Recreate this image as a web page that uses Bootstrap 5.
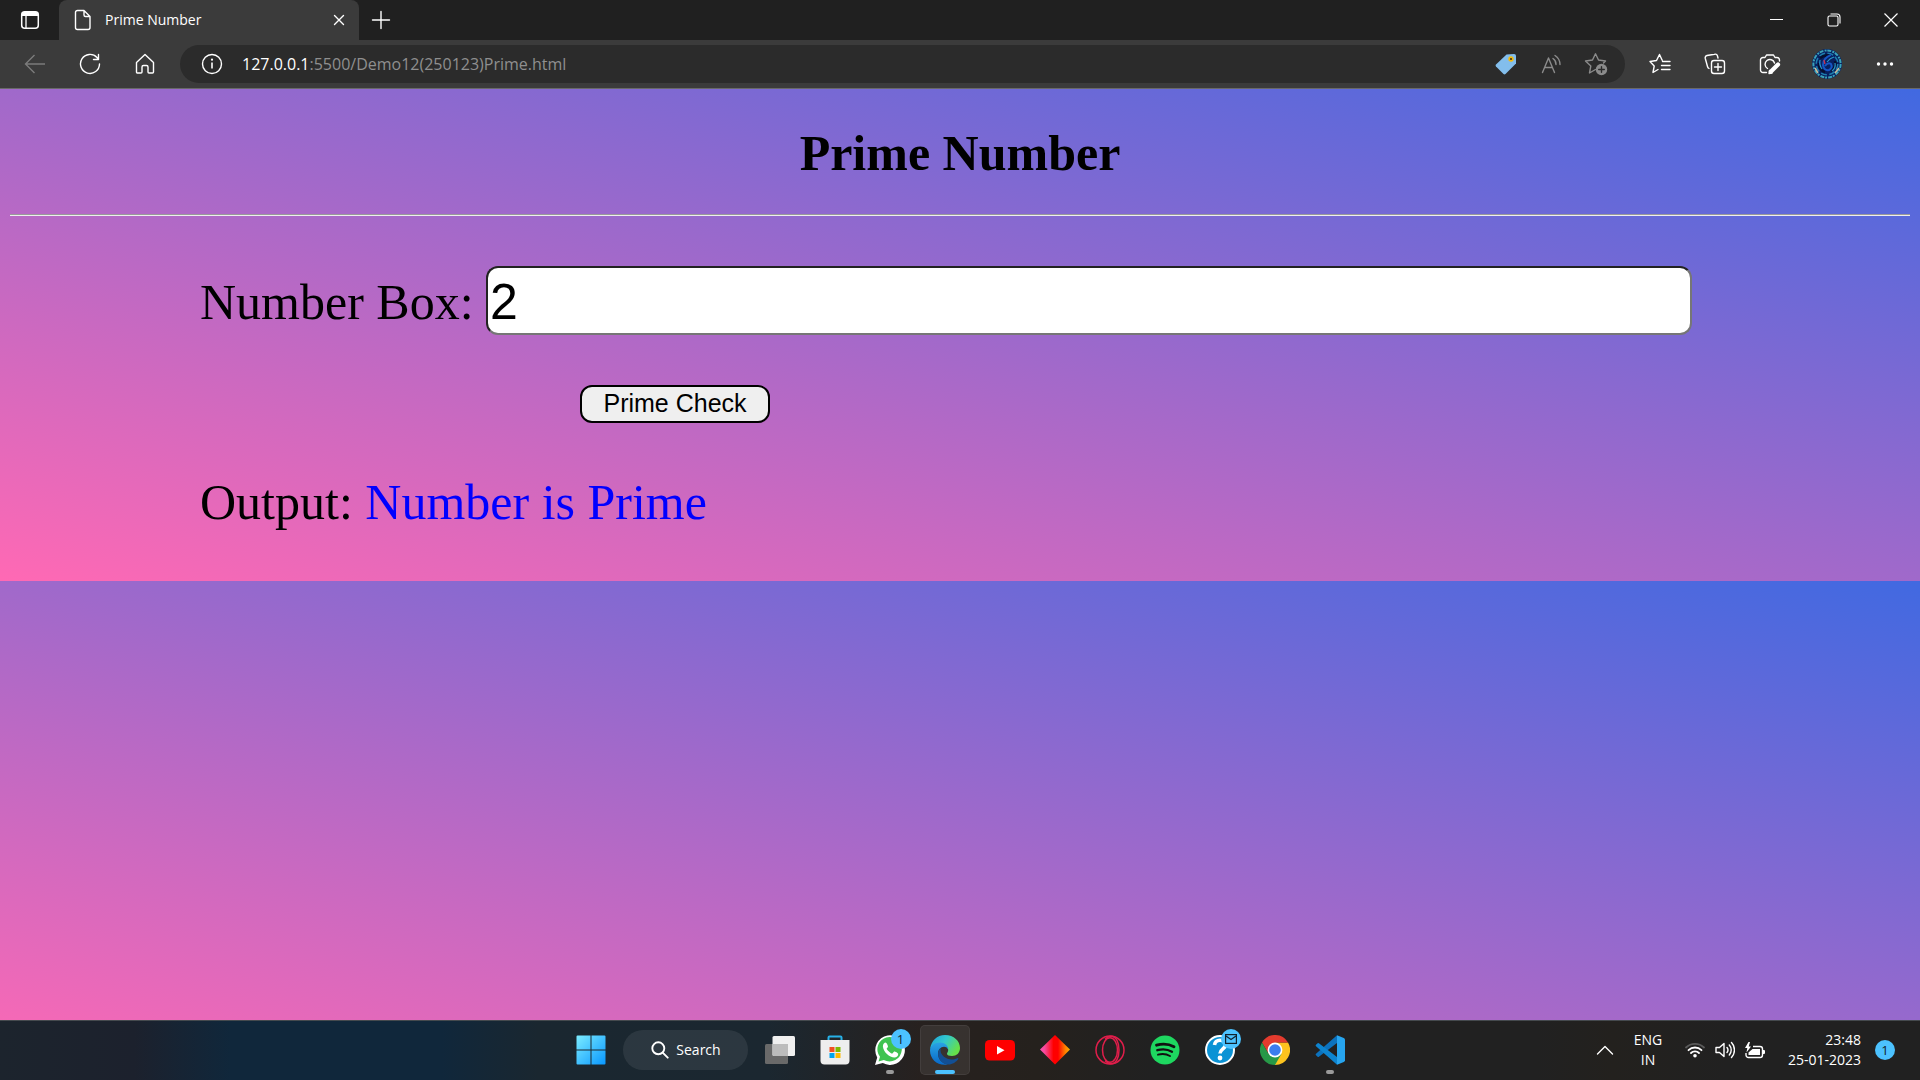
<!DOCTYPE html>
<html lang="en">
<head>
<meta charset="utf-8">
<meta name="viewport" content="width=device-width, initial-scale=1">
<title>Prime Number</title>
<link href="https://cdn.jsdelivr.net/npm/bootstrap@5.3.0/dist/css/bootstrap.min.css" rel="stylesheet">
<style>
  body { font-family: "Open Sans", "Noto Sans", sans-serif; font-size: 14px; line-height: 20px; color: #fff; background: #212121; }
  svg { display: block; flex: none; fill: none; }
  .plain { border: 0; background: none; padding: 0; color: inherit; display: flex; align-items: center; justify-content: center; flex: none; }
  .line-art { stroke: currentColor; stroke-width: 1.4; stroke-linecap: round; stroke-linejoin: round; }

  /* browser frame */
  .tab-strip { height: 40px; background: #202020; }
  .tab-menu { width: 59px; height: 40px; }
  .page-tab { width: 300px; height: 40px; background: #3b3b3b; border-radius: 8px 8px 0 0; padding: 0 10px 0 14px; }
  .tab-close { width: 20px; height: 20px; }
  .tab-new { width: 44px; height: 40px; }
  .win-controls { padding-right: 1px; }
  .win-btn { width: 57px; height: 40px; }
  .tool-bar { height: 49px; background: #3b3b3b; border-bottom: 1px solid #696969; padding: 0 8px 0 7px; }
  .tool-btn { width: 55px; height: 40px; }
  .tool-profile { width: 60px; height: 40px; }
  .address { height: 38px; background: #2b2b2b; border-radius: 19px; margin: 0 7px 0 8px; padding: 0 7px 0 9px; }
  .address-btn { width: 45px; height: 38px; color: #8b8b8b; }
  .address-text { border: 0; background: none; font-size: 16px; line-height: 24px; color: #8f8f8f; margin-left: 8px; white-space: nowrap; }
  .address-text b { font-weight: 400; color: #fff; }

  /* web page */
  .page { background: linear-gradient(to top right, hotpink, royalblue) 0 0 / 100% 492px; color: #000; font-family: "Liberation Serif", serif; font-size: 50px; line-height: 59px; padding: 35px 10px 0; }
  .page-title { font-size: 50px; line-height: 59px; font-weight: 700; margin: 0 0 31px; text-align: center; }
  .page-rule { margin: 0; border: 0; border-top: 1px solid #9a9a9a; border-bottom: 1px solid #eee; height: 2px; opacity: 1; }
  .prime-form { margin-top: 50px; padding: 0 218px 0 190px; display: grid; gap: 50px; }
  .number-input { height: 69px; padding: 3px 2px 1px; border: 2px solid; border-color: #222 #767676 #767676 #222; border-radius: 12px; font: 50px "Liberation Sans", sans-serif; color: #000; background: #fff; }
  .number-input:focus { color: #000; }
  .check-btn { width: 190px; height: 38px; margin-left: 380px; padding: 0 0 2px; border: 2px solid #000; border-radius: 12px; background: #efefef; color: #000; font: 25px "Liberation Sans", sans-serif; line-height: 30px; }
  .result { color: #00f; }

  /* taskbar */
  .task-bar { height: 60px; box-shadow: inset 0 1px #454a4e; background: linear-gradient(90deg, #1c242d 0, #1c212d 7%, #10273b 12%, #10273b 23%, #1a2730 28%, #1b2730 40%, #27211f 48%, #25211d 54%, #212121 60%, #212121 80%, #23211e 84%, #212121 90%); }
  .task-apps { gap: 5px; }
  .task-btn { width: 50px; height: 50px; border-radius: 5px; position: relative; }
  .task-active { background: #ffffff14; box-shadow: inset 0 0 0 1px #ffffff10; }
  .running::after { content: ""; position: absolute; bottom: 1px; width: 8px; height: 4px; border-radius: 2px; background: #9a9a9a; }
  .task-active.running::after { width: 20px; background: #4cc2ff; }
  .bubble { position: absolute; top: 4px; right: 4px; width: 20px; height: 20px; border-radius: 50%; background: #4cc2ff; color: #10222e; display: flex; align-items: center; justify-content: center; font-size: 13px; }
  .task-search { width: 125px; height: 40px; border-radius: 20px; background: #ffffff14; margin: 0 2px; padding-left: 2px; gap: 7px; }
  .tray { padding-right: 25px; }
  .tray-up { width: 40px; height: 40px; }
  .tray-lang { width: 46px; height: 44px; text-align: center; }
  .tray-status { width: 108px; height: 44px; gap: 10px; }
  .tray-clock { width: 82px; text-align: right; }
  .tray-count { width: 20px; height: 20px; border-radius: 50%; background: #4cc2ff; color: #10222e; font-size: 13px; margin-left: 14px; }
</style>
<script src="https://cdn.jsdelivr.net/npm/bootstrap@5.3.0/dist/js/bootstrap.bundle.min.js"></script>
</head>
<body class="d-flex flex-column vh-100 overflow-hidden">

<header>
  <div class="tab-strip d-flex align-items-center">
    <button class="plain tab-menu" aria-label="Tab actions">
      <svg width="20" height="20" viewBox="0 0 20 20"><rect x="1.7" y="1.7" width="16.6" height="16.6" rx="3" stroke="#fff" stroke-width="1.5"/><path d="M2 6V4a2 2 0 0 1 2-2h12a2 2 0 0 1 2 2v2z" fill="#fff"/><path d="M6 6v12" stroke="#fff" stroke-width="1.3"/></svg>
    </button>
    <div class="page-tab d-flex align-items-center">
      <svg class="line-art" width="20" height="22" viewBox="0 0 20 22"><path d="M4.5 1.5H11l6 6v11a2 2 0 0 1-2 2H4.500a2 2 0 0 1-2-2v-15a2 2 0 0 1 2-2zM11 1.500V6a1.500 1.500 0 0 0 1.500 1.500H17"/></svg>
      <span class="ms-2 ps-1 flex-grow-1">Prime Number</span>
      <button class="plain tab-close" aria-label="Close tab"><svg class="line-art" width="12" height="12" viewBox="0 0 12 12"><path d="M1.500 1.500l9 9M10.500 1.500l-9 9"/></svg></button>
    </div>
    <button class="plain tab-new" aria-label="New tab"><svg class="line-art" width="20" height="20" viewBox="0 0 20 20"><path d="M10 1.500v17M1.500 10h17"/></svg></button>
    <div class="win-controls d-flex ms-auto">
      <button class="plain win-btn" aria-label="Minimize"><svg width="14" height="14" viewBox="0 0 14 14"><path d="M0 6.500h13" stroke="#fff"/></svg></button>
      <button class="plain win-btn" aria-label="Restore"><svg width="14" height="14" viewBox="0 0 14 14" stroke="#fff" stroke-width="1.100"><rect x="1" y="3" width="10" height="10" rx="1.500"/><path d="M3.500 1H10a3 3 0 0 1 3 3v6.500"/></svg></button>
      <button class="plain win-btn" aria-label="Close"><svg width="14" height="14" viewBox="0 0 14 14"><path d="M.5.5l13 13M13.500.5l-13 13" stroke="#fff" stroke-width="1.200"/></svg></button>
    </div>
  </div>

  <nav class="tool-bar d-flex align-items-center" aria-label="Browser">
    <button class="plain tool-btn" aria-label="Back" disabled><svg width="22" height="20" viewBox="0 0 22 20" stroke="#7b7b7b" stroke-width="1.400"><path d="M21 10H1.500M10.500 1L1.500 10l9 9"/></svg></button>
    <button class="plain tool-btn" aria-label="Refresh"><svg class="line-art" width="22" height="22" viewBox="0 0 22 22"><path d="M20.500 11a9.500 9.500 0 1 1-2.500-6.500L19.500 6.500M19.500 1.500v5h-5"/></svg></button>
    <button class="plain tool-btn" aria-label="Home"><svg class="line-art" width="20" height="22" viewBox="0 0 20 22"><path d="M1.500 9.500L10 1.500l8.500 8V19a1 1 0 0 1-1 1H14a1 1 0 0 1-1-1v-5a1.500 1.500 0 0 0-1.500-1.500h-3A1.500 1.500 0 0 0 7 14v5a1 1 0 0 1-1 1H2.500a1 1 0 0 1-1-1z"/></svg></button>

    <div class="address d-flex align-items-center flex-grow-1">
      <button class="plain address-btn text-white" aria-label="Site information"><svg width="22" height="22" viewBox="0 0 22 22"><circle cx="11" cy="11" r="9.500" stroke="#fff" stroke-width="1.400"/><path d="M11 9.500v6" stroke="#fff" stroke-width="1.600"/><circle cx="11" cy="6.700" r="1.100" fill="#fff"/></svg></button>
      <div class="address-text flex-grow-1"><b>127.0.0.1</b>:5500/Demo12(250123)Prime.html</div>
      <button class="plain address-btn" aria-label="Shopping"><svg width="22" height="22" viewBox="0 0 22 22"><path d="M11.500 1.500L19 1a2 2 0 0 1 2 2v7.500L10.500 21a1.500 1.500 0 0 1-2 0L1 13.500a1.500 1.500 0 0 1 0-2z" fill="#83beec"/><circle cx="16" cy="6" r="2.700" fill="#f2b90c"/><circle cx="16" cy="6" r="1.100" fill="#3b3320"/></svg></button>
      <button class="plain address-btn" aria-label="Read aloud"><svg class="line-art" width="22" height="20" viewBox="0 0 22 20"><path d="M2.500 18.500L8.500 4l6 14.500M4.700 13.500h7.600M13 4.500a7 7 0 0 1 3 6M15 1.500a11 11 0 0 1 5 9"/></svg></button>
      <button class="plain address-btn" aria-label="Add to favorites"><svg class="line-art" width="24" height="24" viewBox="0 0 24 24"><path d="M11.500 17.500L5.500 21l1.300-7L1.500 9l7-1L11.500 1.800 14.500 8l7 1-2 2"/><circle cx="17.500" cy="17.500" r="5.700" fill="currentColor" stroke="none"/><path d="M17.500 14.700v5.600M14.700 17.500h5.600" stroke="#2b2b2b"/></svg></button>
    </div>

    <button class="plain tool-btn" aria-label="Favorites"><svg class="line-art" width="22" height="22" viewBox="0 0 22 22"><path d="M9 16.500l-5 3 1.200-6.500L1 8.500l6.500-1L10.500 1.500l2.700 5.700M13.500 8.500H21M12.500 12.500H21M12.500 16.500H21"/></svg></button>
    <button class="plain tool-btn" aria-label="Collections"><svg class="line-art" width="22" height="22" viewBox="0 0 22 22"><rect x="7.500" y="7.500" width="13" height="13" rx="2.500"/><path d="M14 10.500v7M10.500 14h7M5 15.500a3 3 0 0 1-1.500-2L1.300 5.500a2.500 2.500 0 0 1 1.700-3L10.500 1.200a2.500 2.500 0 0 1 3 1.800l.5 2"/></svg></button>
    <button class="plain tool-btn" aria-label="Web capture"><svg class="line-art" width="22" height="22" viewBox="0 0 22 22"><path d="M7.500 19.500H4A2.500 2.500 0 0 1 1.500 17V7A2.500 2.500 0 0 1 4 4.500h2L7.500 2h7L16 4.500h2A2.500 2.500 0 0 1 20.500 7v1M8.500 15.500A4.800 4.800 0 1 1 15.500 10"/><path d="M12 18.500l7-7" stroke-width="4.200"/><path d="M10 20.500l.5-3 2.500 2.500z" fill="currentColor"/></svg></button>
    <button class="plain tool-profile" aria-label="Profile"><svg width="30" height="30" viewBox="0 0 30 30"><circle cx="15" cy="15" r="15" fill="#082060"/><circle cx="15" cy="15" r="13.600" stroke="#3aa3b8" stroke-width="2" stroke-dasharray="4 1.200 2 .8"/><circle cx="15" cy="15" r="10.800" stroke="#1d7fae" stroke-width="1.600" stroke-dasharray="6 2.500"/><path d="M8 9q5-4 11-2M23 12q2 6-4 10M7 14q0 7 6 9" stroke="#06102f" stroke-width="2.600"/><path d="M19 6q-8 3-8 10 1 6 6 5 4-2 2-6-3-2-6 2" stroke="#1656c4" stroke-width="2"/><path d="M22 8q-4 1-7 5M8 11q-1 5 2 9M20 22q4-3 3-8" stroke="#2a95c9" stroke-width="1.200"/><path d="M12 11l1 4" stroke="#c93050" stroke-width="1.300"/><path d="M3 19l3 5M27 19l-4 5" stroke="#c9bd9c" stroke-width="1.500"/></svg></button>
    <button class="plain tool-btn" aria-label="Settings and more"><svg width="18" height="6" viewBox="0 0 18 6"><circle cx="2.500" cy="3" r="1.700" fill="#fff"/><circle cx="9" cy="3" r="1.700" fill="#fff"/><circle cx="15.500" cy="3" r="1.700" fill="#fff"/></svg></button>
  </nav>
</header>

<main class="page flex-grow-1 overflow-hidden">
  <h1 class="page-title">Prime Number</h1>
  <hr class="page-rule">
  <form class="prime-form">
    <div class="d-flex align-items-baseline">
      <label for="number-box" class="text-nowrap">Number Box:&nbsp;</label>
      <input id="number-box" class="number-input form-control flex-grow-1 w-auto" type="text" inputmode="numeric" value="2">
    </div>
    <button class="check-btn" type="button">Prime Check</button>
    <div>Output: <output class="result d-inline" for="number-box">Number is Prime</output></div>
  </form>
</main>

<footer class="task-bar d-flex align-items-center">
  <div class="flex-fill w-25"></div>
  <div class="task-apps d-flex align-items-center flex-shrink-0">
    <button class="plain task-btn" aria-label="Start"><svg width="30" height="30" viewBox="0 0 30 30"><defs><linearGradient id="win" x1="0" y1="0" x2="1" y2="1"><stop stop-color="#7cecff"/><stop offset="1" stop-color="#0897ff"/></linearGradient></defs><path d="M.5 1.500a1 1 0 0 1 1-1h13v14H.5zM15.500.5h13a1 1 0 0 1 1 1v13h-14zM.5 15.500h14v14h-13a1 1 0 0 1-1-1zM15.500 15.500h14v13a1 1 0 0 1-1 1h-13z" fill="url(#win)"/></svg></button>
    <button class="plain task-search"><svg width="18" height="18" viewBox="0 0 18 18" stroke="#fff" stroke-width="1.900" stroke-linecap="round"><circle cx="7.300" cy="7.300" r="6"/><path d="M11.700 11.700l5 5"/></svg><span>Search</span></button>
    <button class="plain task-btn" aria-label="Task view"><svg width="30" height="30" viewBox="0 0 30 30"><rect x="0" y="9" width="23" height="20" rx="1.500" fill="#696969"/><rect x="7.500" y="1" width="22.500" height="20" rx="1.500" fill="#f0f0f0"/><path d="M7.500 9H23v12H9a1.500 1.500 0 0 1-1.500-1.500z" fill="#bcbcbc"/></svg></button>
    <button class="plain task-btn" aria-label="Microsoft Store"><svg width="30" height="30" viewBox="0 0 30 30"><path d="M8.500 6V2.500a1 1 0 0 1 1-1h11a1 1 0 0 1 1 1V6" stroke="#27b1e8" stroke-width="2"/><path d="M.5 5h29v20.500a4 4 0 0 1-4 4h-21a4 4 0 0 1-4-4z" fill="#eee"/><path d="M9.500 12h5v5h-5z" fill="#f25022"/><path d="M15.500 12h5v5h-5z" fill="#7fba00"/><path d="M9.500 18h5v5h-5z" fill="#00a4ef"/><path d="M15.500 18h5v5h-5z" fill="#ffb900"/></svg></button>
    <button class="plain task-btn running" aria-label="WhatsApp"><svg width="30" height="30" viewBox="0 0 30 30"><path d="M0 30l2.200-7.600A14.800 14.800 0 1 1 7.800 28z" fill="#fff"/><path d="M3.500 26.500l1.500-4.700A12.200 12.200 0 1 1 8.800 25z" fill="#3fc351"/><path d="M10.500 7.500c-.8 0-2.800 1.400-2.600 4 .5 5.500 6.500 11 11.600 11 2 0 3.700-1.600 3.700-3.600 0-.8-3.400-2.500-4-2.300-.7.300-1.300 2-2 2-1.500 0-5.400-3.700-5.500-4.800 0-.7 1.300-1.300 1.300-2.200 0-1-1.400-4.100-2.500-4.100z" fill="#fff"/></svg><span class="bubble">1</span></button>
    <button class="plain task-btn task-active running" aria-label="Microsoft Edge"><svg width="30" height="30" viewBox="0 0 30 30"><defs><linearGradient id="edge-a" x1="0" y1="0" x2="1" y2=".5"><stop stop-color="#1ca0dc"/><stop offset=".5" stop-color="#32c8cd"/><stop offset="1" stop-color="#66e04a"/></linearGradient><linearGradient id="edge-b" x1="0" y1="0" x2="0" y2="1"><stop stop-color="#2aa4e4"/><stop offset="1" stop-color="#0868c8"/></linearGradient></defs><path d="M.2 14C1 6 7 0 15 0c9 0 15 6 15 13 0 5-3.500 8-8 8-3 0-5-1-5-2.300 0-1 1.200-1.500 1.200-3.700 0-3-3-5.800-7.200-5.800C5.500 9.200 1 11.500.2 14z" fill="url(#edge-a)"/><path d="M0 15.500C0 11 4.500 7.500 10 7.500c5 0 8.200 3 8.200 7-1-2-2.500-2.700-4.200-2.700-3.500 0-6 3.200-6 6.700C8 24 12 28.500 18 29.500 8 31.500 0 24.500 0 15.500z" fill="url(#edge-b)"/><path d="M11 13c-2 1.500-2.900 3.500-2.900 6 0 5.300 4.400 10.400 10.400 10.400 4 0 7.600-2.400 9.700-5.500.4-.6-.2-1-.8-.7-2 1-4 1.200-5.600 1.200C16 24.400 10.500 20 10.500 15.500c0-1 .2-1.800.5-2.500z" fill="#124f94"/></svg></button>
    <button class="plain task-btn" aria-label="YouTube"><svg width="30" height="30" viewBox="0 0 30 30"><rect y="5" width="30" height="20.500" rx="4.500" fill="#f00"/><path d="M12 11l7.500 4.200-7.500 4.300z" fill="#fff"/></svg></button>
    <button class="plain task-btn" aria-label="Diamond app"><svg width="30" height="30" viewBox="0 0 30 30"><defs><linearGradient id="gem"><stop stop-color="#f957b5"/><stop offset=".15" stop-color="#f64a9c"/><stop offset=".45" stop-color="#f00"/><stop offset=".6" stop-color="#f00"/><stop offset=".85" stop-color="#ff8200"/><stop offset="1" stop-color="#ffb000"/></linearGradient></defs><path d="M15 0l15 14.500L15 29.500 0 14.500z" fill="url(#gem)"/></svg></button>
    <button class="plain task-btn" aria-label="Opera GX"><svg width="30" height="30" viewBox="0 0 30 30" stroke="#e01e4b" stroke-width="1.500"><circle cx="15" cy="15" r="14"/><ellipse cx="15" cy="15" rx="7.500" ry="12.300"/><path d="M10 4.200C12 2 14 1.200 16 1.200c5 0 8 6 8 13.800s-3 13.800-8 13.800c-2 0-4-.8-6-3"/></svg></button>
    <button class="plain task-btn" aria-label="Spotify"><svg width="30" height="30" viewBox="0 0 30 30" stroke="#111" stroke-linecap="round"><circle cx="15" cy="15" r="14.500" fill="#1ed760" stroke="none"/><path d="M6.500 10.200c6-1.700 12.500-1.200 17.500 1.600" stroke-width="2.800"/><path d="M7.300 15.200c5-1.400 10.500-.9 14.700 1.500" stroke-width="2.300"/><path d="M8 19.700c4.300-1.100 8.500-.7 12 1.300" stroke-width="1.900"/></svg></button>
    <button class="plain task-btn" aria-label="Get Help"><svg width="30" height="30" viewBox="0 0 30 30"><circle cx="15" cy="15" r="14" fill="#0b93d5" stroke="#fff" stroke-width="2"/><path d="M9.500 10c.5-3 2.500-4.800 5.500-4.800s5.500 1.800 5.500 4.600c0 4-5.500 4.200-5.500 8.700" stroke="#fff" stroke-width="3.600"/><circle cx="15" cy="23" r="2.400" fill="#fff"/></svg><span class="bubble"><svg width="12" height="10" viewBox="0 0 12 10" stroke="#10222e" stroke-width="1.200"><rect x=".6" y=".6" width="10.800" height="8.800"/><path d="M1 2l5 3.500L11 2"/></svg></span></button>
    <button class="plain task-btn" aria-label="Chrome"><svg width="30" height="30" viewBox="0 0 30 30"><path d="M15 15v15A15 15 0 0 0 28 7.500H15z" fill="#fcc31e"/><path d="M15 7.500h13A15 15 0 0 0 2 7.500l6.500 11.200z" fill="#e33b2e"/><path d="M2 7.500A15 15 0 0 0 15 30l6.500-11.200h-13z" fill="#279847"/><circle cx="15" cy="15" r="7.400" fill="#fff"/><circle cx="15" cy="15" r="5.800" fill="#3b7ded"/></svg></button>
    <button class="plain task-btn running" aria-label="Visual Studio Code"><svg width="30" height="30" viewBox="0 0 30 30"><path d="M22 .2L1 18.800a1 1 0 0 0 0 1.500l1.600 1.500a1 1 0 0 0 1.300 0L22 8z" fill="#0c72bd"/><path d="M22 29.800L1 11.200a1 1 0 0 1 0-1.500l1.600-1.500a1 1 0 0 1 1.300 0L22 22z" fill="#0e84cf"/><path d="M22 .2L28.800 3a2 2 0 0 1 1.200 1.800v20.400a2 2 0 0 1-1.200 1.800L22 29.800z" fill="#27a5ef"/></svg></button>
  </div>
  <div class="tray d-flex align-items-center justify-content-end flex-fill w-25">
    <button class="plain tray-up" aria-label="Show hidden icons"><svg class="line-art" width="18" height="10" viewBox="0 0 18 10"><path d="M1.500 9L9 1.500 16.500 9"/></svg></button>
    <button class="plain tray-lang">ENG<br>IN</button>
    <button class="plain tray-status" aria-label="Network, volume, battery">
      <svg width="20" height="16" viewBox="0 0 20 16" stroke="#fff" stroke-width="1.800" stroke-linecap="round"><path d="M1 5.500a13 13 0 0 1 18 0" stroke="#5a5a5a"/><path d="M3.500 8.200a9.200 9.200 0 0 1 13 0M6 11a5.700 5.700 0 0 1 8 0"/><circle cx="10" cy="13.800" r="1.800" fill="#fff" stroke="none"/></svg>
      <svg class="line-art" width="20" height="18" viewBox="0 0 20 18"><path d="M1 6.500h3.500L9 2.500v13l-4.500-4H1zM12 6.500a4 4 0 0 1 0 5M14.300 4a7.500 7.500 0 0 1 0 10M16.500 1.500a11 11 0 0 1 0 15"/></svg>
      <svg width="20" height="17" viewBox="0 0 20 17"><path d="M8 4.500h7a2.500 2.500 0 0 1 2.500 2.500v6a2.500 2.500 0 0 1-2.500 2.500H3.500A2.500 2.500 0 0 1 1 13v-2" stroke="#fff" stroke-width="1.400"/><path d="M7.500 7H15v6H3.500v-2.500z" fill="#fff"/><path d="M18 8h1a1 1 0 0 1 1 1v2a1 1 0 0 1-1 1h-1zM3.500 0L0 6h2.300L1.500 10.500 6 4.500H3.700L5 0z" fill="#fff"/></svg>
    </button>
    <button class="plain tray-clock justify-content-end">23:48<br>25-01-2023</button>
    <button class="plain tray-count" aria-label="1 notification">1</button>
  </div>
</footer>
</body>
</html>
